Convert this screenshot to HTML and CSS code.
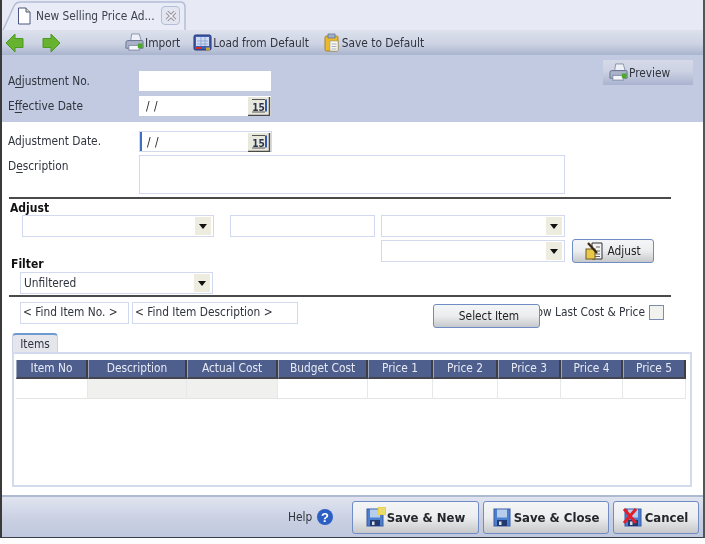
FILE: index.html
```
<!DOCTYPE html>
<html lang="en">
<head>
<meta charset="utf-8">
<title>New Selling Price Adjustment</title>
<link rel="stylesheet" href="styles.css">
</head>
<body>
<svg class="defs" width="0" height="0" aria-hidden="true">
  <defs>
    <symbol id="printer" viewBox="0 0 20 20">
      <path d="M7 1h8l2 7H6z" fill="#eef0f7" stroke="#8a94ae"/>
      <path d="M3 8h15a1 1 0 0 1 1 1v7H1V10a2 2 0 0 1 2-2z" fill="#aab3c9" stroke="#66718e"/>
      <rect x="4" y="13" width="11" height="5" fill="#f5f6fa" stroke="#7f8aa6"/>
      <rect x="13.500" y="11" width="5" height="5" fill="#4fa82e"/>
    </symbol>
    <symbol id="floppy" viewBox="0 0 18 20">
      <rect x="1" y="2" width="16" height="17" fill="#4d7fcf" stroke="#3a5ba3"/>
      <rect x="4" y="2.500" width="10" height="8" fill="#b7cdec"/>
      <rect x="4" y="13" width="10" height="6" fill="#23386f"/>
      <rect x="6" y="14.500" width="2.500" height="3.500" fill="#d7dfee"/>
    </symbol>
    <symbol id="combo-arrow" viewBox="0 0 16 18">
      <rect width="16" height="18" fill="#eeecdf"/>
      <path d="M4 7h8l-4 5z" fill="#111"/>
    </symbol>
    <symbol id="cal" viewBox="0 0 24 20">
      <rect x="1" y="1" width="21" height="18" fill="#e9e8dc"/>
      <path d="M22.500 1v18.500H1" fill="none" stroke="#4a4a4a" stroke-width="1.500"/>
      <path d="M5 3.500h13" stroke="#555" stroke-width="1"/>
      <rect x="18" y="3.500" width="2" height="12" fill="#3457b0"/>
      <text x="11.500" y="14.500" text-anchor="middle" class="cal-num">15</text>
      <path d="M5 16h13" stroke="#555" stroke-width="1"/>
    </symbol>
  </defs>
</svg>
<div class="window">
  <div class="tabstrip">
    <div class="doc-tab">
      <svg class="doc-tab-bg" viewBox="0 0 186 29" width="186" height="29"><path d="M1 29 L12 5 Q14 1 19 1 H178 Q183 1 183 6 V29" fill="#e9ecf6" stroke="#b3bdd6" stroke-width="1.500"/></svg>
      <svg class="ico-doc" viewBox="0 0 14 18" width="14" height="18"><path d="M1.500 1H9l4 4v12H1.500z" fill="#fff" stroke="#4a5680"/><path d="M9 1v4h4" fill="#e9dcae" stroke="#4a5680"/></svg>
      <span class="doc-tab-title">New Selling Price Ad...</span>
      <span class="doc-tab-close"><svg viewBox="0 0 12 12" width="12" height="12"><path d="M2 2l8 8M10 2l-8 8" stroke="#8e8e98" stroke-width="3.400"/><path d="M2 2l8 8M10 2l-8 8" stroke="#f3f3f6" stroke-width="1.600"/></svg></span>
    </div>
  </div>
  <div class="toolbar">
    <div class="nav-arrows">
      <svg viewBox="0 0 19 20" width="19" height="20"><path d="M1 10 10 1v4.500h8v9h-8V19z" fill="#67b32f" stroke="#4b9a22"/></svg>
      <svg viewBox="0 0 19 20" width="19" height="20"><path d="M18 10 9 1v4.500H1v9h8V19z" fill="#67b32f" stroke="#4b9a22"/></svg>
    </div>
    <div class="tool-btn"><svg width="19" height="19"><use href="#printer"/></svg>Import</div>
    <div class="tool-btn"><svg viewBox="0 0 19 19" width="19" height="19"><rect x="1" y="2" width="17" height="15" rx="1.500" fill="#3e5fb6" stroke="#22336f"/><rect x="3" y="4" width="13" height="9" fill="#cfdcf3"/><path d="M4 8h11M4 11h11M8 4v9M12 4v9" stroke="#7d95cf" stroke-width=".7"/><rect x="3" y="14" width="5" height="2" fill="#d92a2a"/><rect x="13" y="14.500" width="4" height="3" fill="#c8a13c"/></svg>Load from Default</div>
    <div class="tool-btn"><svg viewBox="0 0 19 19" width="19" height="19"><rect x="3" y="3" width="13" height="15" rx="1.500" fill="#eab92f" stroke="#a6832a"/><rect x="6" y="1" width="7" height="4" fill="#9fb0cc" stroke="#5d6d8d" stroke-width=".7"/><rect x="8" y="8" width="8" height="10" fill="#f9f9ee" stroke="#8b8b77" stroke-width=".5"/><path d="M9.500 11h5M9.500 13.500h5M9.500 16h5" stroke="#7e8fb0" stroke-width=".7"/></svg>Save to Default</div>
  </div>
  <div class="head-panel">
    <div class="head-fields">
      <div class="form-row">
        <label class="field-label"><span class="u-wrap">A<u>d</u>justment No.</span></label>
        <div class="plain-box"></div>
      </div>
      <div class="form-row">
        <label class="field-label"><span class="u-wrap">E<u>f</u>fective Date</span></label>
        <div class="date-box plain-box"><span class="date-text">/ /</span><svg class="cal-ico" width="24" height="20"><use href="#cal"/></svg></div>
      </div>
    </div>
    <div class="preview-btn"><svg width="19" height="19"><use href="#printer"/></svg>Preview</div>
  </div>
  <div class="form-body">
    <div class="form-row row-date">
      <label class="field-label date-label">Adjustment Date.</label>
      <div class="date-box edge-box focused"><span class="date-text">/ /</span><svg class="cal-ico" width="24" height="20"><use href="#cal"/></svg></div>
    </div>
    <div class="form-row row-desc">
      <label class="field-label desc-label">D<u>e</u>scription</label>
      <div class="edge-box desc-box"></div>
    </div>
    <hr class="rule">
    <div class="adjust-grid">
      <div class="section-title">Adjust</div>
      <div class="adjust-row">
        <div class="combo edge-box combo-a"><svg class="combo-ico" width="16" height="18"><use href="#combo-arrow"/></svg></div>
        <div class="edge-box text-b"></div>
        <div class="combo edge-box combo-c"><svg class="combo-ico" width="16" height="18"><use href="#combo-arrow"/></svg></div>
      </div>
      <div class="adjust-row2">
        <div class="combo edge-box combo-c"><svg class="combo-ico" width="16" height="18"><use href="#combo-arrow"/></svg></div>
        <div class="btn adjust-btn">
          <svg viewBox="0 0 20 20" width="20" height="20"><path d="M7 2h10v16H7z" fill="#f2f3f4" stroke="#333"/><path d="M11 6h4M9 10h6M10 13h5M10 15.500h5" stroke="#666"/><rect x="1" y="8" width="9" height="10" fill="#e9c94a" stroke="#6e5a1c"/><path d="M3 2l9 10" stroke="#3a2a12" stroke-width="2.200"/></svg>
          Adjust
        </div>
      </div>
      <div class="filter-part">
        <div class="section-title filter-title">Filter</div>
        <div class="combo edge-box combo-f"><span class="combo-text">Unfiltered</span><svg class="combo-ico" width="16" height="18"><use href="#combo-arrow"/></svg></div>
      </div>
    </div>
    <hr class="rule rule-2">
    <div class="find-row">
      <div class="edge-box find-no">&lt; Find Item No. &gt;</div>
      <div class="edge-box find-desc">&lt; Find Item Description &gt;</div>
      <div class="btn select-btn">Select Item</div>
      <label class="show-label">Show Last Cost &amp; Price</label>
      <span class="checkbox"></span>
    </div>
    <div class="items-tab">Items</div>
    <div class="items-panel">
      <div class="grid-table">
        <div class="gh">Item No</div><div class="gh">Description</div><div class="gh">Actual Cost</div><div class="gh">Budget Cost</div><div class="gh">Price 1</div><div class="gh">Price 2</div><div class="gh">Price 3</div><div class="gh">Price 4</div><div class="gh">Price 5</div>
        <div class="gc"></div><div class="gc gc-off"></div><div class="gc gc-off"></div><div class="gc"></div><div class="gc"></div><div class="gc"></div><div class="gc"></div><div class="gc"></div><div class="gc"></div>
      </div>
    </div>
  </div>
  <div class="footer">
    <span class="help-text">Help</span>
    <svg class="help-ico" viewBox="0 0 16 16" width="16" height="16"><circle cx="8" cy="8" r="8" fill="#2c5fc4"/><text x="8" y="12.500" text-anchor="middle" class="help-q">?</text></svg>
    <div class="btn foot-btn save-new"><span class="foot-ico"><svg width="18" height="20"><use href="#floppy"/></svg><i class="star"></i></span>Save &amp; New</div>
    <div class="btn foot-btn save-close"><svg width="18" height="20"><use href="#floppy"/></svg>Save &amp; Close</div>
    <div class="btn foot-btn cancel"><span class="foot-ico"><svg width="18" height="20"><use href="#floppy"/></svg><svg class="x-over" viewBox="0 0 16 18" width="16" height="18"><path d="M2 2l12 14M14 2 2 16" stroke="#e0202a" stroke-width="3"/></svg></span>Cancel</div>
  </div>
</div>
</body>
</html>
```
FILE: styles.css
```
* { box-sizing: border-box; }
html, body { margin: 0; padding: 0; background: #fdfdfd; }
body {
  width: 705px;
  height: 544px;
  overflow: hidden;
  font-family: "DejaVu Sans", sans-serif;
  font-stretch: condensed;
  font-size: 11.800px;
  color: #333a44;
}
.defs { position: absolute; }
.cal-num { font: bold 10px "DejaVu Sans", sans-serif; font-stretch: condensed; fill: #2a3550; }
.help-q { font: bold 13px "Liberation Sans", sans-serif; fill: #fff; }
u { text-decoration-thickness: 1px; text-underline-offset: 2px; }

.window {
  width: 705px;
  height: 538px;
  display: flex;
  flex-direction: column;
  border-left: 2px solid #3a3a3a;
  border-right: 2px solid #555;
  border-bottom: 1px solid #3c3f48;
  background: #fff;
  filter: blur(.45px);
}

/* Document tab strip */
.tabstrip { height: 30px; flex: none; background: #e7eaf5; display: flex; align-items: flex-end; }
.doc-tab { position: relative; width: 186px; height: 29px; display: flex; align-items: center; padding-left: 15px; }
.doc-tab-bg { position: absolute; left: 0; top: 0; }
.ico-doc { position: relative; flex: none; }
.doc-tab-title { position: relative; margin-left: 5px; width: 125px; white-space: nowrap; color: #3d4352; }
.doc-tab-close {
  position: relative; width: 19px; height: 19px; display: flex; align-items: center; justify-content: center;
  border: 1.500px solid #b4bed8; border-radius: 4px; background: #e3e6f1;
}

/* Toolbar */
.toolbar {
  height: 25px; flex: none; display: flex; align-items: center; padding-left: 3px;
  background: linear-gradient(#dde1ed 0%, #cdd3e3 55%, #a9b4ce 100%);
}
.nav-arrows { display: flex; gap: 18px; width: 120px; }
.tool-btn { display: flex; align-items: center; gap: 1px; margin-right: 13px; white-space: nowrap; color: #30343e; }

/* Header panel */
.head-panel { height: 67px; flex: none; background: #c1cae0; display: flex; justify-content: space-between; padding: 5px 10px 0 0; }
.head-fields { display: flex; flex-direction: column; gap: 5px; padding: 11px 0 0 6px; }
.form-row { display: flex; align-items: center; }
.field-label { width: 131px; color: #30343e; white-space: nowrap; }
.plain-box { width: 132px; height: 20px; background: #fff; }
.date-box { position: relative; display: flex; align-items: center; padding-left: 7px; }
.date-text { letter-spacing: .5px; color: #222; }
.cal-ico { position: absolute; right: 0; top: 0; }
.preview-btn {
  width: 90px; height: 25px; display: flex; align-items: center; padding-left: 6px; gap: 1px; color: #30343e;
  background: linear-gradient(#d5d9e8, #cdd2e3 45%, #a9b3cf);
}

/* Form body */
.form-body { flex: 1; display: flex; flex-direction: column; padding: 9px 0 0 0; min-height: 0; }
.edge-box { border: 1.500px solid #d2d9ee; background: #fff; }
.row-date { padding-left: 6px; }
.row-desc { padding-left: 6px; margin-top: 3px; align-items: flex-start; }
.row-date .edge-box { width: 133px; height: 21px; }
.focused { box-shadow: inset 2px 0 0 #3f6fc0; }
.date-label { padding-bottom: 2px; }
.desc-label { padding-top: 4px; }
.desc-box { width: 426px; height: 39px; }
.rule { width: 662px; height: 2px; margin: 3px 0 0 7px; border: 0; background: #4a4a4a; flex: none; }
.rule-2 { margin-top: 0; }

.adjust-grid { display: flex; flex-direction: column; height: 96px; padding-left: 8px; }
.section-title { font-weight: bold; font-size: 12px; color: #111; line-height: 14px; margin-top: 2px; }
.adjust-row { display: flex; margin: 0 0 0 12px; }
.adjust-row .combo-a { width: 192px; }
.combo { position: relative; height: 22px; }
.combo-ico { position: absolute; right: 2px; top: 1px; }
.combo-text { display: block; padding: 3px 0 0 3px; color: #30343e; }
.text-b { width: 145px; height: 22px; margin-left: 16px; }
.combo-c { width: 184px; }
.adjust-row .combo-c { margin-left: 6px; }
.adjust-row2 { display: flex; align-items: center; margin: 2px 0 0 371px; gap: 7px; }
.btn {
  display: flex; align-items: center; justify-content: center; white-space: nowrap; color: #222;
  border: 1.500px solid #6f8cc4; border-radius: 3px;
  background: linear-gradient(#f4f5f7, #ecedee 50%, #c6c8cb);
}
.adjust-btn { width: 82px; height: 24px; gap: 2px; }
.filter-part { margin-top: -6px; }
.filter-title { margin: 0 0 1px 1px; }
.combo-f { width: 193px; height: 22px; margin-left: 10px; }

.find-row { display: flex; align-items: flex-start; height: 36px; padding: 5px 0 0 18px; }
.find-no { width: 109px; height: 22px; padding: 2px 0 0 2px; white-space: nowrap; color: #30343e; }
.find-desc { width: 166px; height: 22px; margin-left: 3px; padding: 2px 0 0 2px; white-space: nowrap; color: #30343e; }
.select-btn { width: 107px; height: 24px; margin: 2px 0 0 135px; padding-left: 5px; position: relative; z-index: 1; }
.show-label { width: 122px; margin-left: -17px; padding-top: 3px; white-space: nowrap; color: #30343e; text-align: right; }
.checkbox { width: 15px; height: 15px; margin: 3px 0 0 4px; border: 1.500px solid #7d8bb0; background: #f1f1ee; }

.items-tab {
  width: 46px; height: 19px; margin-left: 10px; flex: none; text-align: center; line-height: 18px; color: #30343e;
  border: 1px solid #c9d1e6; border-top: 2px solid #6d9ad2; border-bottom: 0; border-radius: 4px 4px 0 0;
  background: #e4e6ec;
}
.items-panel { width: 680px; height: 135px; margin-left: 10px; flex: none; border: 2px solid #d3daee; padding: 6px 0 0 2px; }
.grid-table { display: grid; grid-template-columns: 72px 99px 91px 90px 65px 65px 63px 62px 63px; width: 670px; }
.gh {
  height: 19px; line-height: 17px; text-align: center; color: #e8ebf5; white-space: nowrap;
  background: #4e5f8e; border-right: 2px solid #3e3e44; border-bottom: 2px solid #44464f; border-left: 1px solid #9aa3bd;
}
.gc { height: 20px; border-right: 1px solid #e8e8e8; border-bottom: 1px solid #e4e4e4; }
.gc-off { background: #f0f0ee; }

/* Footer */
.footer {
  height: 42px; flex: none; display: flex; align-items: center; padding-left: 286px;
  border-top: 2px solid #aeb9d3;
  background: linear-gradient(#e0e4ef, #c8cfe2 60%, #bfc8de);
}
.help-text { color: #30343e; width: 29px; }
.help-ico { flex: none; }
.foot-btn { height: 33px; font-size: 13px; font-weight: bold; gap: 3px; color: #23262c; }
.save-new { width: 127px; margin-left: 19px; }
.save-close { width: 126px; margin-left: 4px; }
.cancel { width: 86px; margin-left: 4px; }
.foot-ico { position: relative; display: flex; }
.x-over { position: absolute; left: -2px; top: 0; }
.star { position: absolute; right: -2px; top: 0; width: 8px; height: 8px; background: #e9dc6a; border: 1px solid #e9d24a; }
```
